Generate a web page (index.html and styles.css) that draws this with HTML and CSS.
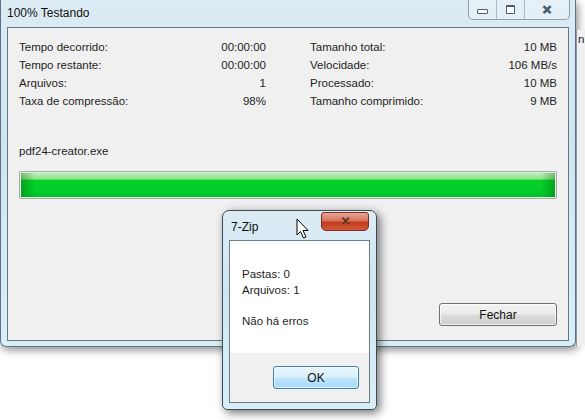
FILE: index.html
```html
<!DOCTYPE html>
<html lang="pt-BR">
<head>
  <meta charset="UTF-8">
  <title>100% Testando</title>
  <link rel="stylesheet" href="styles.css">
</head>
<body>
  <div class="desktop">
    <div class="window main">
      <div class="titlebar">
        <span class="title">100% Testando</span>
        <div class="caption">
          <div class="cap-btn"><span class="ico-min"></span></div>
          <div class="cap-btn"><span class="ico-max"></span></div>
          <div class="cap-btn close"><span class="ico-x">&#10005;</span></div>
        </div>
      </div>
      <div class="client">
        <div class="stats">
          <div class="col">
            <div class="row"><span>Tempo decorrido:</span><span>00:00:00</span></div>
            <div class="row"><span>Tempo restante:</span><span>00:00:00</span></div>
            <div class="row"><span>Arquivos:</span><span>1</span></div>
            <div class="row"><span>Taxa de compressão:</span><span>98%</span></div>
          </div>
          <div class="col">
            <div class="row"><span>Tamanho total:</span><span>10 MB</span></div>
            <div class="row"><span>Velocidade:</span><span>106 MB/s</span></div>
            <div class="row"><span>Processado:</span><span>10 MB</span></div>
            <div class="row"><span>Tamanho comprimido:</span><span>9 MB</span></div>
          </div>
        </div>
        <div class="filename">pdf24-creator.exe</div>
        <div class="progress"><div class="bar"></div></div>
        <div class="actions">
          <button class="btn fechar">Fechar</button>
        </div>
      </div>
    </div>

    <div class="behind">
      <span class="behind-text">n</span>
    </div>

    <div class="window dialog">
      <div class="titlebar small">
        <span class="title">7-Zip</span>
        <div class="red-close">&#10005;</div>
      </div>
      <div class="dlg-client">
        <div class="dlg-body">
          <p>Pastas: 0<br>Arquivos: 1</p>
          <p>Não há erros</p>
        </div>
        <div class="dlg-foot">
          <button class="btn ok">OK</button>
        </div>
      </div>
    </div>

    <svg class="cursor" width="14" height="22" viewBox="0 0 14 22">
      <path d="M1 1 L1 17 L4.5 13.5 L7.5 20 L10 19 L7 12.5 L12 12.5 Z" fill="#fff" stroke="#000" stroke-width="1"/>
    </svg>
  </div>
</body>
</html>
```

FILE: styles.css
```css
body {
  margin: 0;
  background: #ffffff;
  font-family: 'Liberation Sans', Arial, sans-serif;
  font-size: 11.5px;
  color: #1e1e1e;
  overflow: hidden;
}

.desktop {
  position: relative;
  width: 585px;
  height: 420px;
}

.window {
  box-sizing: border-box;
  background: linear-gradient(180deg, #dcebf4 0%, #cfe6f2 40%, #d9eef7 100%);
  border: 1px solid #5c7183;
  border-radius: 7px 7px 5px 5px;
  box-shadow: 2px 3px 8px rgba(0, 0, 0, 0.45);
}

.main {
  width: 576px;
  height: 347px;
  padding: 0 6px 5px 6px;
  display: flex;
  flex-direction: column;
  border-top: none;
  border-radius: 0 0 6px 6px;
}

.titlebar {
  height: 27px;
  display: flex;
  align-items: flex-start;
  justify-content: space-between;
  flex-shrink: 0;
}

.title {
  font-size: 12px;
  color: #111;
  padding-top: 6px;
}

.caption {
  display: flex;
  height: 19px;
  border: 1px solid #8c9fae;
  border-top: none;
  border-radius: 0 0 5px 5px;
  margin-right: -1px;
  background: rgba(255, 255, 255, 0.25);
}

.cap-btn {
  width: 27px;
  display: flex;
  align-items: center;
  justify-content: center;
  border-right: 1px solid #a9bac6;
}

.cap-btn.close {
  width: 44px;
  border-right: none;
}

.ico-min {
  width: 9px;
  height: 3px;
  border: 1px solid #4c5f6c;
  border-radius: 1px;
  background: #fff;
  margin-top: 4px;
}

.ico-max {
  width: 7px;
  height: 6px;
  border: 1px solid #4c5f6c;
  border-top-width: 2px;
  border-radius: 1px;
  background: #fff;
}

.ico-x {
  font-size: 12px;
  font-weight: bold;
  color: #fff;
  -webkit-text-stroke: 0.8px #4c5f6c;
}

.client {
  flex: 1;
  background: #f0f0f0;
  border: 1px solid #67777f;
  display: flex;
  flex-direction: column;
  padding: 10px 11px 14px 11px;
}

.stats {
  display: flex;
  gap: 44px;
}

.col {
  width: 247px;
  display: flex;
  flex-direction: column;
}

.row {
  height: 18px;
  display: flex;
  justify-content: space-between;
  align-items: center;
}

.filename {
  margin-top: 35px;
  height: 16px;
}

.progress {
  margin-top: 10px;
  height: 24px;
  border: 1px solid #a3b1a6;
  border-radius: 2px;
  background: #e6e6e6;
  padding: 1px;
}

.bar {
  height: 100%;
  background:
    linear-gradient(90deg, rgba(0, 90, 0, 0.35) 0, rgba(0, 0, 0, 0) 14px, rgba(0, 0, 0, 0) calc(100% - 14px), rgba(0, 90, 0, 0.35) 100%),
    linear-gradient(180deg, #b9f0b7 0, #8ee68c 25%, #0bcf27 30%, #00cf2c 70%, #00c129 100%);
}

.actions {
  margin-top: auto;
  display: flex;
  justify-content: flex-end;
}

.btn {
  font-family: 'Liberation Sans', Arial, sans-serif;
  font-size: 12px;
  color: #111;
  border: 1px solid #707070;
  border-radius: 3px;
  background: linear-gradient(180deg, #f3f3f3 0%, #ebebeb 48%, #dddddd 52%, #cfcfcf 100%);
  box-shadow: inset 0 0 0 1px rgba(255, 255, 255, 0.7);
  padding: 0;
}

.fechar {
  width: 118px;
  height: 23px;
}

.behind {
  position: absolute;
  left: 576px;
  top: 30px;
  width: 9px;
  height: 316px;
  background: #f0f0f0;
  border-left: 1px solid #8a9aa4;
  overflow: hidden;
}

.behind-text {
  display: block;
  margin-top: 3px;
  padding-left: 1px;
  font-size: 11.5px;
}

.dialog {
  position: absolute;
  left: 222px;
  top: 210px;
  width: 155px;
  height: 200px;
  padding: 0 6px 6px 6px;
  display: flex;
  flex-direction: column;
  border-color: #3e4c57;
  box-shadow: 3px 3px 10px rgba(0, 0, 0, 0.55);
}

.titlebar.small {
  height: 29px;
}

.titlebar.small .title {
  padding-top: 9px;
  padding-left: 2px;
}

.red-close {
  width: 46px;
  height: 17px;
  margin-top: 1px;
  margin-right: 1px;
  border: 1px solid #7a2d22;
  border-radius: 3px 3px 5px 5px;
  background: linear-gradient(180deg, #e8a593 0%, #d6745c 45%, #c2391c 55%, #d35a3b 100%);
  color: #fff;
  font-size: 11px;
  font-weight: bold;
  text-align: center;
  line-height: 16px;
  -webkit-text-stroke: 0.5px #6b1e12;
}

.dlg-client {
  flex: 1;
  border: 1px solid #6c7c86;
  background: #f0f0f0;
  display: flex;
  flex-direction: column;
}

.dlg-body {
  background: #ffffff;
  height: 112px;
  padding: 25px 0 0 12px;
  box-sizing: border-box;
}

.dlg-body p {
  margin: 0 0 15px 0;
  line-height: 16px;
}

.dlg-foot {
  flex: 1;
  display: flex;
  justify-content: flex-end;
  align-items: flex-start;
  padding: 13px 10px 0 0;
}

.ok {
  width: 86px;
  height: 23px;
  border-color: #3c7fb1;
  background: linear-gradient(180deg, #eaf6fd 0%, #d9f0fc 48%, #bee6fd 52%, #a7d9f5 100%);
}

.cursor {
  position: absolute;
  left: 296px;
  top: 218px;
}
```
